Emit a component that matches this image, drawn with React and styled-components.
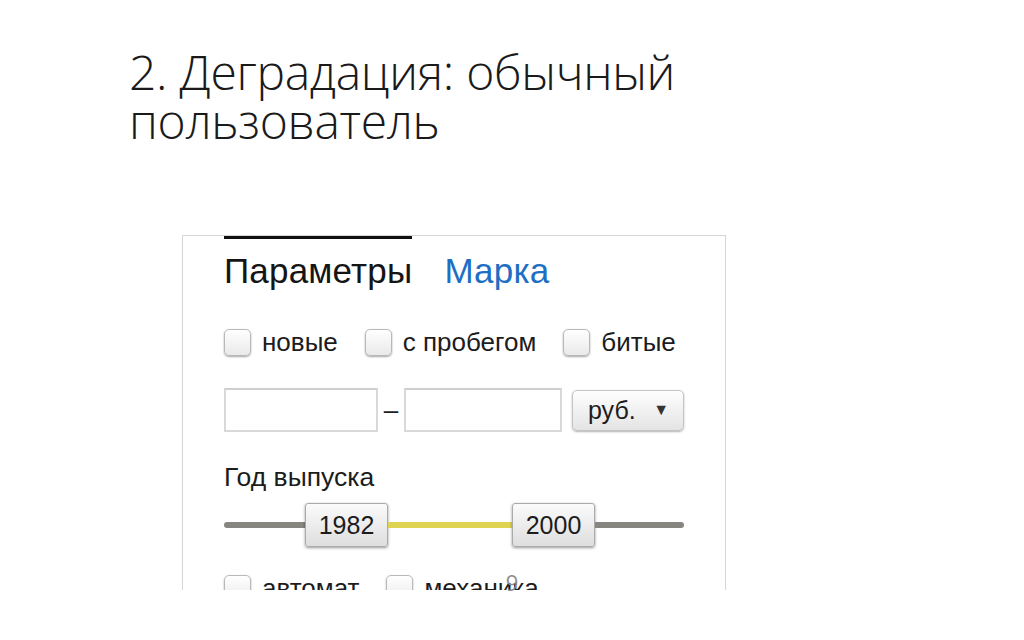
import React from 'react'
import styled, { createGlobalStyle } from 'styled-components'

const Global = createGlobalStyle`
  html, body { margin: 0; padding: 0; background: #fff; }
`

const Slide = styled.div`
  position: relative;
  width: 1024px;
  height: 640px;
  overflow: hidden;
  background: #fff;
  padding: 47px 0 0 129px;
  box-sizing: border-box;
`

const Title = styled.h1`
  margin: 0;
  font-family: 'Open Sans', sans-serif;
  font-weight: 300;
  font-size: 48px;
  line-height: 49px;
  color: #1a1a1a;
  letter-spacing: -0.3px;
`

const Frame = styled.div`
  margin: 90px 0 0 53px;
  width: 544px;
  height: 355px;
  box-sizing: border-box;
  border: 1px solid #d6d6d6;
  border-bottom: none;
  padding: 0 0 0 41px;
  overflow: hidden;
  font-family: 'Liberation Sans', Arial, sans-serif;
  color: #1c1c1c;
`

const Tabs = styled.div`
  display: flex;
  gap: 32px;
  margin-top: -1px;
`

const Tab = styled.div`
  font-size: 35px;
  line-height: 34px;
  padding-top: 15px;
  border-top: 4px solid ${p => (p.active ? '#111' : 'transparent')};
  color: ${p => (p.active ? '#151515' : '#1e6fc4')};
  letter-spacing: 0.2px;
`

const Row = styled.div`
  display: flex;
  align-items: center;
  margin-top: ${p => p.top}px;
`

const Check = styled.label`
  display: flex;
  align-items: center;
  gap: 11px;
  margin-right: 27px;
  font-size: 26px;
  line-height: 28px;
`

const Box = styled.span`
  display: block;
  width: 27px;
  height: 27px;
  box-sizing: border-box;
  border: 1px solid #b9b9b9;
  border-radius: 5px;
  background: linear-gradient(#ffffff, #e9e9e9);
  box-shadow: 0 1px 2px rgba(0, 0, 0, 0.35);
`

const Field = styled.div`
  width: ${p => p.w}px;
  height: 44px;
  box-sizing: border-box;
  border: 2px solid #d9d9d9;
  border-top-color: #cfcfcf;
  background: #fff;
`

const Dash = styled.span`
  width: 26px;
  text-align: center;
  font-size: 26px;
  line-height: 44px;
`

const Select = styled.div`
  margin-left: 10px;
  width: 112px;
  height: 41px;
  box-sizing: border-box;
  display: flex;
  align-items: center;
  justify-content: space-between;
  padding: 0 14px 0 15px;
  border: 1px solid #c4c4c4;
  border-radius: 5px;
  background: linear-gradient(#fefefe, #e4e4e4);
  box-shadow: 0 1px 2px rgba(0, 0, 0, 0.3);
  font-size: 25px;
`

const Arrow = styled.span`
  font-size: 16px;
  color: #333;
`

const Label = styled.div`
  margin-top: 29px;
  font-size: 26.5px;
  line-height: 32px;
`

const Slider = styled.div`
  display: flex;
  align-items: center;
  width: 460px;
  margin-top: 10px;
`

const Track = styled.div`
  width: ${p => p.w}px;
  height: 6px;
  background: ${p => (p.active ? '#ded451' : '#878580')};
  border-radius: ${p => p.round || '0'};
`

const Handle = styled.div`
  width: 83px;
  height: 44px;
  box-sizing: border-box;
  display: flex;
  align-items: center;
  justify-content: center;
  border: 1px solid #aaa;
  border-radius: 3px;
  background: linear-gradient(#fbfbfb, #dedede);
  box-shadow: 0 1px 3px rgba(0, 0, 0, 0.4);
  font-size: 25px;
`

const PageNum = styled.div`
  position: absolute;
  left: 0;
  right: 0;
  top: 567px;
  text-align: center;
  font-family: 'Open Sans', sans-serif;
  font-size: 22px;
  color: #8c8c8c;
`

export default function App() {
  return (
    <Slide>
      <Global />
      <Title>
        2. Деградация: обычный
        <br />
        пользователь
      </Title>
      <Frame>
        <Tabs>
          <Tab active>Параметры</Tab>
          <Tab>Марка</Tab>
        </Tabs>
        <Row top={40}>
          <Check><Box />новые</Check>
          <Check><Box />с пробегом</Check>
          <Check><Box />битые</Check>
        </Row>
        <Row top={32}>
          <Field w={154} />
          <Dash>–</Dash>
          <Field w={158} />
          <Select>руб. <Arrow>▼</Arrow></Select>
        </Row>
        <Label>Год выпуска</Label>
        <Slider>
          <Track w={81} round="3px 0 0 3px" />
          <Handle>1982</Handle>
          <Track w={124} active />
          <Handle>2000</Handle>
          <Track w={89} round="0 3px 3px 0" />
        </Slider>
        <Row top={27}>
          <Check><Box />автомат</Check>
          <Check><Box />механика</Check>
        </Row>
      </Frame>
      <PageNum>9</PageNum>
    </Slide>
  )
}
